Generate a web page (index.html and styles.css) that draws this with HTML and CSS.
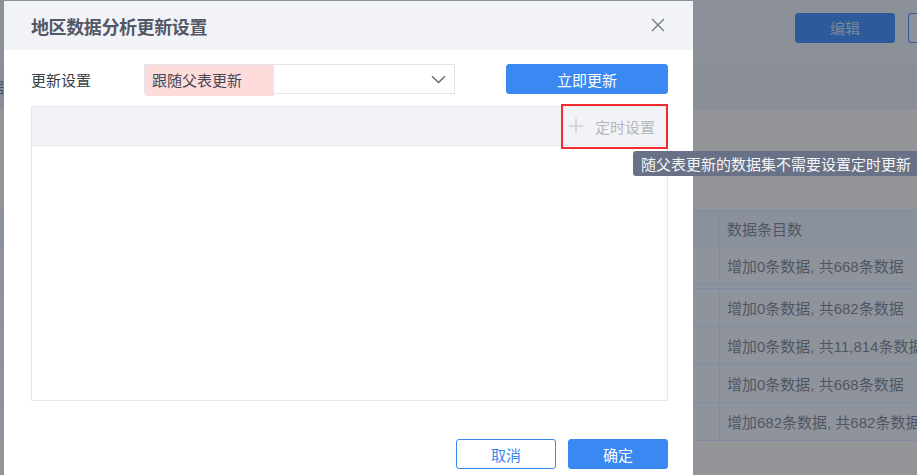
FILE: index.html
```html
<!DOCTYPE html>
<html lang="zh">
<head>
<meta charset="utf-8">
<link rel="stylesheet" href="styles.css">
</head>
<body>
<div class="page">
  <div class="topbar">
    <button class="bg-btn primary">编辑</button>
    <button class="bg-btn outline">删除</button>
  </div>
  <div class="subbar"><span class="clip-text">数据</span></div>
  <div class="content">
    <div class="bg-table">
      <div class="bg-row head"><div class="c1"></div><div class="c2">数据条目数</div></div>
      <div class="bg-row"><div class="c1"></div><div class="c2">增加0条数据, 共668条数据</div></div>
      <div class="bg-gap"></div>
      <div class="bg-row"><div class="c1"></div><div class="c2">增加0条数据, 共682条数据</div></div>
      <div class="bg-row"><div class="c1"></div><div class="c2">增加0条数据, 共11,814条数据</div></div>
      <div class="bg-row"><div class="c1"></div><div class="c2">增加0条数据, 共668条数据</div></div>
      <div class="bg-row"><div class="c1"></div><div class="c2">增加682条数据, 共682条数据</div></div>
    </div>
  </div>
</div>

<div class="modal">
  <div class="modal-header">
    <span class="modal-title">地区数据分析更新设置</span>
    <svg class="close" width="14" height="14" viewBox="0 0 14 14"><path d="M1 1L13 13M13 1L1 13" stroke="#737987" stroke-width="1.4" fill="none"/></svg>
  </div>
  <div class="modal-body">
    <div class="form-row">
      <span class="label">更新设置</span>
      <div class="select">
        <span class="select-value">跟随父表更新</span>
        <svg class="chevron" width="15" height="9" viewBox="0 0 15 9"><path d="M1 1.2L7.5 7.5L14 1.2" stroke="#5f6572" stroke-width="1.4" fill="none"/></svg>
      </div>
      <button class="btn primary wide">立即更新</button>
    </div>
    <div class="panel">
      <div class="panel-head">
        <div class="timer">
          <svg width="16" height="16" viewBox="0 0 16 16"><path d="M8 0.5V15.5M0.5 8H15.5" stroke="#cfd2d8" stroke-width="1.5" fill="none"/></svg>
          <span>定时设置</span>
        </div>
      </div>
    </div>
    <div class="footer">
      <button class="btn ghost">取消</button>
      <button class="btn primary">确定</button>
    </div>
  </div>
  <div class="mark"></div>
  <div class="tooltip">随父表更新的数据集不需要设置定时更新</div>
</div>
</body>
</html>
```

FILE: styles.css
```css
* { box-sizing: border-box; }
html, body { margin: 0; padding: 0; }
body {
  width: 917px;
  height: 475px;
  overflow: hidden;
  position: relative;
  font-family: "Noto Sans CJK SC", "Liberation Sans", sans-serif;
  background: #939599;
}
button { font-family: inherit; }

/* background page (dimmed by overlay) */
.page { width: 917px; }
.topbar {
  height: 62px;
  background: #8b9099;
  display: flex;
  align-items: flex-start;
  padding: 13px 0 0 795px;
  gap: 13px;
}
.bg-btn {
  width: 100px;
  height: 30px;
  border-radius: 3px;
  font-size: 15px;
  flex-shrink: 0;
  padding: 0;
  line-height: 28px;
}
.bg-btn.primary { background: #2d5a9b; border: 1px solid #2d5a9b; color: #7d8898; }
.bg-btn.outline { background: transparent; border: 1px solid #2d5a9b; color: #2d5a9b; }
.subbar {
  height: 48px;
  background: #898e97;
  display: flex;
  align-items: center;
}
.clip-text {
  margin-left: -26px;
  font-size: 15px;
  color: #4d5461;
}
.content { padding-top: 100px; }
.bg-table { border-top: 1px solid #7f8ca2; }
.bg-row {
  display: grid;
  grid-template-columns: 720px 1fr;
  height: 38px;
  border-bottom: 1px solid #7f8ca2;
  background: #8f949c;
}
.bg-row.head { height: 36px; background: #8a919d; }
.bg-row .c1 { border-right: 1px solid #7f8ca2; }
.bg-row .c2 {
  padding-left: 7px;
  display: flex;
  align-items: center;
  font-size: 15px;
  color: #4f5663;
  white-space: nowrap;
  overflow: hidden;
  font-family: "Liberation Sans", "Noto Sans CJK SC", sans-serif;
}
.bg-gap {
  height: 4px;
  border-bottom: 1px solid #7f8ca2;
  display: grid;
  background: #8f949c;
  background-image: linear-gradient(to right, transparent 720px, #7f8ca2 720px, #7f8ca2 721px, transparent 721px);
}

/* modal */
.modal {
  position: absolute;
  left: 4px;
  top: 1px;
  width: 689px;
  height: 500px;
  background: #fff;
}
.modal-header {
  height: 49px;
  background: #f2f3f7;
  display: flex;
  align-items: center;
  justify-content: space-between;
  padding: 0 28px 0 27px;
}
.modal-title {
  font-size: 18px;
  font-weight: bold;
  color: #525866;
  letter-spacing: -0.4px;
}
.close { margin-top: -2px; }
.modal-body { padding: 0 25px 0 27px; }
.form-row {
  margin-top: 14px;
  display: flex;
  align-items: center;
  height: 30px;
}
.label {
  width: 113px;
  font-size: 15px;
  color: #3b3f47;
}
.select {
  position: relative;
  width: 311px;
  height: 30px;
  border: 1px solid #e3e5ea;
  display: flex;
  align-items: center;
  justify-content: space-between;
  padding: 0 8px 0 7px;
}
.select::before {
  content: "";
  position: absolute;
  left: 0;
  top: 0;
  width: 129px;
  height: 31px;
  background: #ffdcdc;
}
.select-value {
  position: relative;
  font-size: 15px;
  color: #444955;
}
.chevron { position: relative; }
.btn {
  width: 100px;
  height: 30px;
  border-radius: 3px;
  font-size: 15px;
  padding: 0;
  cursor: pointer;
}
.btn.primary { background: #3a88f1; border: 1px solid #3a88f1; color: #fff; }
.btn.ghost { background: #fff; border: 1px solid #3a88f1; color: #3a88f1; }
.btn.wide { width: 162px; margin-left: auto; }
.panel {
  margin-top: 12px;
  height: 295px;
  border: 1px solid #e5e7eb;
}
.panel-head {
  height: 39px;
  background: #f2f3f7;
  border-bottom: 1px solid #e5e7eb;
  display: flex;
  justify-content: flex-end;
  align-items: center;
  padding-right: 12px;
}
.timer {
  display: flex;
  align-items: center;
  gap: 11px;
  font-size: 15px;
  color: #b3b7be;
}
.footer {
  display: flex;
  justify-content: flex-end;
  gap: 12px;
  margin-top: 38px;
}
.mark {
  position: absolute;
  left: 557px;
  top: 103px;
  width: 107px;
  height: 45px;
  border: 2px solid #f02c2f;
}
.tooltip {
  position: absolute;
  left: 629px;
  top: 150px;
  height: 25px;
  padding: 0 9px 0 8px;
  background: #687185;
  color: #f4f5f7;
  font-size: 15px;
  line-height: 25px;
  border-radius: 3px 0 0 3px;
  white-space: nowrap;
}
```
